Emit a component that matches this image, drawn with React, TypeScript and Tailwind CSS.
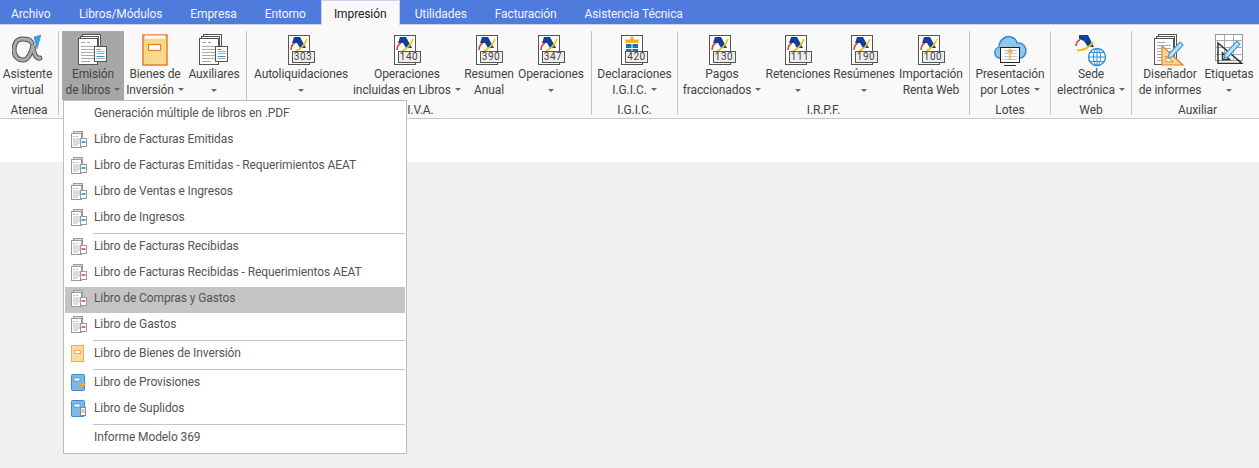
import type { ReactNode } from "react";

const FONT = "font-['Roboto','Noto_Sans',sans-serif]";

const tabs = ["Libros/Módulos", "Empresa", "Entorno"];
const tabsRight = ["Utilidades", "Facturación", "Asistencia Técnica"];

function Caret() {
  return <span className="inline-block w-0 h-0 border-x-[3px] border-x-transparent border-t-[3px] border-t-[#666] align-middle" />;
}

function DocsIcon() {
  return (
    <svg width="30" height="32" viewBox="0 0 30 32" fill="none">
      <rect x="4.5" y="0.5" width="18" height="24" fill="#fff" stroke="#555" />
      <rect x="2.5" y="2.5" width="18" height="24" fill="#fff" stroke="#555" />
      <rect x="0.5" y="4.5" width="19" height="26" fill="#fff" stroke="#555" />
      <path d="M3 8.5h4M9 8.5h3M3 12.5h14M3 15.5h14M3 18.5h14M3 21.5h14M3 24.5h14M3 27.5h9" stroke="#aaa" />
      <rect x="16.5" y="12.5" width="12" height="15" fill="#fff" stroke="#555" />
      <path d="M18.5 15.5h4M18.5 22.5h8" stroke="#1e9ad6" />
      <path d="M18.5 17.5h8M18.5 19.5h8M18.5 24.5h8" stroke="#aaa" />
    </svg>
  );
}

function BookIcon() {
  return (
    <svg width="26" height="32" viewBox="0 0 26 32">
      <rect x="1" y="1" width="24" height="30" fill="#f7d98c" stroke="#ec7a2c" strokeWidth="1.5" />
      <rect x="3" y="1.5" width="20" height="3" fill="#fff" />
      <rect x="6.5" y="10.5" width="12" height="6" fill="#fff" stroke="#ec7a2c" strokeWidth="1.2" />
    </svg>
  );
}

function AlphaIcon() {
  const d = "M20 6 C18 2 14 2 10 2 C4 2 2 8 2 13 C2 19 6 23 11 23 C16 23 19 17 21 8 C21 16 24 22 28 21";
  return (
    <svg width="32" height="30" viewBox="0 0 32 30">
      <path d="M22 3 L29 1 L25 15 Z" fill="#3a9ee0" stroke="#2a7fc0" strokeWidth="0.5" />
      <g transform="translate(0 3)" fill="none" strokeLinecap="round">
        <path d={d} stroke="#555" strokeWidth="5" />
        <path d={d} stroke="#aaa" strokeWidth="3" />
      </g>
    </svg>
  );
}

function AeatMark() {
  return (
    <svg width="20" height="16" viewBox="0 0 20 16" className="block">
      <path d="M2 14 C2 11 4 8 6 7" fill="none" stroke="#e8402a" strokeWidth="1.6" />
      <path d="M5 1 H11 L17 12 H11 L8 7 H3 Z" fill="#123f9c" />
      <path d="M7 15 C12 13 16 8 18 3" fill="none" stroke="#f4c20d" strokeWidth="1.8" />
    </svg>
  );
}

function CoatMark() {
  return (
    <svg width="20" height="18" viewBox="0 0 20 18" className="block">
      <path d="M4 7 L3 3 L7 4 L10 0 L13 4 L17 3 L16 7 Z" fill="#f2b218" />
      <rect x="4" y="8" width="12" height="10" fill="#1b6fb5" />
      <path d="M4 12.5H16M10 8V18" stroke="#fff" />
    </svg>
  );
}

function FormIcon({ code, coat }: { code: string; coat?: boolean }) {
  return (
    <div className="relative w-[27px] h-[30px] mt-[1px]">
      <div className="absolute left-0 top-0 w-[22px] h-[30px] bg-white border border-[#555]">
        {coat ? <CoatMark /> : <AeatMark />}
      </div>
      <div className="absolute left-[4px] bottom-[2px] w-[23px] h-[12px] bg-[#eee] border border-[#555] flex items-center justify-center text-[10px] leading-[10px] text-[#444] tracking-[0.5px]">
        {code}
      </div>
    </div>
  );
}

function CloudIcon() {
  return (
    <svg width="34" height="33" viewBox="0 0 34 33">
      <path d="M6 24 C1 23 0 15 6 13 C6 6 13 1 18 3 C22 4 24 7 24 9 C30 8 33 13 33 17 C33 21 30 24 27 24 Z" fill="#8ec8f0" stroke="#2d86c8" strokeWidth="1.3" />
      <rect x="7.5" y="13.5" width="19" height="15" fill="#fff" stroke="#222" />
      <path d="M11 16.5h13M11 19.5h13M11 22.5h13M11 25.5h13" stroke="#c8c8c8" />
      <path d="M9 16.5v.5M9 19.5v.5M9 22.5v.5M9 25.5v.5" stroke="#e9a030" />
      <path d="M17 26V16M14.5 18.5 17 15.5l2.5 3" fill="none" stroke="#f0a020" strokeWidth="1.2" />
      <path d="M11 31.5h12" stroke="#333" />
    </svg>
  );
}

function SedeIcon() {
  return (
    <svg width="32" height="33" viewBox="0 0 32 33">
      <path d="M1 12 C1 9 3 6 5 6" fill="none" stroke="#e8402a" strokeWidth="1.6" />
      <path d="M4 1 H13 L19 13 H13 L9 7 L4 5 Z" fill="#123f9c" />
      <path d="M2 16 C9 17 15 13 18 8" fill="none" stroke="#f4c20d" strokeWidth="2" />
      <circle cx="22" cy="23" r="8.5" fill="#fff" stroke="#2d8fd0" strokeWidth="1.4" />
      <ellipse cx="22" cy="23" rx="3.5" ry="8.5" fill="none" stroke="#2d8fd0" />
      <path d="M13.5 23H30.5M15 18.5H29M15 27.5H29M22 14.5V31.5" stroke="#2d8fd0" />
    </svg>
  );
}

function DesignIcon() {
  return (
    <svg width="32" height="32" viewBox="0 0 32 32">
      <rect x="4.5" y="0.5" width="18" height="24" fill="#fff" stroke="#555" />
      <rect x="2.5" y="2.5" width="18" height="24" fill="#fff" stroke="#555" />
      <rect x="0.5" y="4.5" width="19" height="26" fill="#fff" stroke="#555" />
      <path d="M3 8.5h8M3 11.5h14M3 14.5h14M3 17.5h14M3 20.5h8M3 23.5h8M3 26.5h8" stroke="#aaa" />
      <path d="M8 12 L29 31 H8 Z" fill="#f7d98c" stroke="#ec7a2c" strokeWidth="1.2" />
      <path d="M12 22 L19 28 H12 Z" fill="#fff" stroke="#ec7a2c" />
      <path d="M15 20 L26 8 L29 11 L18 23 L14 24 Z" fill="#bfe0f7" stroke="#3a9ee0" strokeWidth="1.2" />
    </svg>
  );
}

function LabelIcon() {
  return (
    <svg width="28" height="30" viewBox="0 0 28 30">
      <rect x="0.5" y="0.5" width="27" height="26" fill="#fff" stroke="#999" />
      <path d="M0.5 6.5H27.5M0.5 13.5H27.5M0.5 20.5H27.5M9.5 0.5V27M18.5 0.5V27" stroke="#aaa" />
      <path d="M3 9 L27 29.5 H3 Z M7.5 19 V25.5 H14.5 Z" fill="none" stroke="#333" strokeWidth="1.5" />
      <path d="M10 20 L22 7 L25 10 L13 23 L9 24 Z" fill="#bfe0f7" stroke="#3a9ee0" strokeWidth="1.2" />
    </svg>
  );
}

function RibbonButton({ className, icon, lines, caret, caretLine, active }: {
  className: string;
  icon: ReactNode;
  lines: string[];
  caret?: boolean;
  caretLine?: boolean;
  active?: boolean;
}) {
  return (
    <div className={`${className} h-[69px] flex flex-col items-center shrink-0 ${active ? "bg-[#a6a6a6]" : ""}`}>
      <div className="h-[35px] flex items-start justify-center pt-[3px]">{icon}</div>
      <div className="text-[12px] leading-[16px] tracking-[-0.1px] text-[#444] text-center whitespace-nowrap">
        {lines.map((l, i) => (
          <div key={l}>
            {l}
            {caret && i === lines.length - 1 && <span className="ml-[4px] relative top-[-1px]"><Caret /></span>}
          </div>
        ))}
        {caretLine && <div className="h-[16px] flex items-center justify-center"><Caret /></div>}
      </div>
    </div>
  );
}

function Group({ className, label, children }: { className: string; label: string; children: ReactNode }) {
  return (
    <div className={`${className} h-[84px] shrink-0 flex flex-col border-r border-[#c6c6c6]`}>
      <div className="flex h-[69px]">{children}</div>
      <div className="h-[15px] mt-[3px] text-[12px] leading-[15px] tracking-[-0.1px] text-[#444] text-center">{label}</div>
    </div>
  );
}

function MenuDocIcon({ mark }: { mark: string }) {
  return (
    <svg width="16" height="17" viewBox="0 0 16 17">
      <rect x="2.5" y="0.5" width="9" height="13" fill="#ddd" stroke="#999" />
      <rect x="0.5" y="2.5" width="10" height="14" fill="#fff" stroke="#999" />
      <path d="M2 5.5h2M5 5.5h2M2 8h7M2 10h7M2 12h7M2 14h5" stroke="#bbb" />
      <rect x="9.5" y="7.5" width="6" height="8" fill="#fff" stroke="#999" />
      <path d="M10.5 11h4" stroke={mark} strokeWidth="2" />
    </svg>
  );
}

function MenuBookIcon() {
  return (
    <svg width="14" height="17" viewBox="0 0 14 17">
      <rect x="0.5" y="0.5" width="12" height="16" fill="#fbdc9f" stroke="#f2a968" />
      <rect x="3.5" y="5.5" width="6" height="3" fill="#fff" stroke="#f2a968" />
    </svg>
  );
}

function MenuBlueIcon({ kind }: { kind: "orange" | "doc" }) {
  return (
    <svg width="16" height="17" viewBox="0 0 16 17">
      <rect x="0.5" y="0.5" width="13" height="16" rx="1" fill="#7db8ea" stroke="#3f88c8" />
      <rect x="3" y="4" width="6" height="3" fill="#fff" stroke="#3f88c8" strokeWidth="0.7" />
      {kind === "orange" ? (
        <path d="M7 12 L10 9 H15 L13 12 L9 14 Z" fill="#f0a33c" />
      ) : (
        <g>
          <rect x="9.5" y="7.5" width="5" height="8" fill="#fff" stroke="#888" />
          <path d="M10.5 10h3M10.5 12h3" stroke="#6ab04c" />
        </g>
      )}
    </svg>
  );
}

function MenuItem({ icon, children, active }: { icon?: ReactNode; children: ReactNode; active?: boolean }) {
  return (
    <div className={`h-[26px] flex items-center ${active ? "bg-[#c4c4c4]" : ""}`}>
      <div className="w-[29px] pl-[6px] pb-[3px] flex items-center shrink-0">{icon}</div>
      <span className="text-[12px] leading-[16px] tracking-[-0.1px] text-[#555] relative top-[-2px] whitespace-nowrap">{children}</span>
    </div>
  );
}

function MenuSep() {
  return <div className="my-[1px] ml-[28px] h-[1px] bg-[#c6c6c6]" />;
}

export default function App() {
  return (
    <div className={`${FONT} relative w-[1259px] h-[468px] overflow-hidden bg-[#f0f0f0]`}>
      {/* pestañas */}
      <div className="h-[25px] bg-[#4e7bdc] flex text-[12px] tracking-[-0.1px] text-[#f2f5fc] border-b border-[#c9d5f0]">
        <div className="w-[65px] h-[25px] pl-[11px] pt-[2px] flex items-center">Archivo</div>
        {tabs.map((t) => (
          <div key={t} className="h-[25px] px-[14px] pt-[2px] flex items-center whitespace-nowrap">{t}</div>
        ))}
        <div className="h-[25px] w-[79px] ml-[1px] pt-[2px] bg-[#f9f9f9] border border-b-0 border-[#c9d5f0] text-[#222] flex items-center justify-center">Impresión</div>
        <div className="w-[1px]" />
        {tabsRight.map((t) => (
          <div key={t} className="h-[25px] px-[14px] pt-[2px] flex items-center whitespace-nowrap">{t}</div>
        ))}
      </div>

      {/* cinta */}
      <div className="h-[94px] bg-[#f9f9f9] border-b border-[#c6c6c6] flex pt-[6px]">
        <Group className="w-[59px]" label="Atenea">
          <RibbonButton className="w-[55px]" icon={<AlphaIcon />} lines={["Asistente", "virtual"]} />
        </Group>
        <Group className="w-[188px] pl-[3px]" label="">
          <RibbonButton className="w-[62px]" active icon={<DocsIcon />} lines={["Emisión", "de libros"]} caret />
          <RibbonButton className="w-[62px]" icon={<BookIcon />} lines={["Bienes de", "Inversión"]} caret />
          <RibbonButton className="w-[56px]" icon={<DocsIcon />} lines={["Auxiliares"]} caretLine />
        </Group>
        <Group className="w-[345px] pl-[3px]" label="I.V.A.">
          <RibbonButton className="w-[102px]" icon={<FormIcon code="303" />} lines={["Autoliquidaciones"]} caretLine />
          <RibbonButton className="w-[110px]" icon={<FormIcon code="140" />} lines={["Operaciones", "incluidas en Libros"]} caret />
          <RibbonButton className="w-[54px]" icon={<FormIcon code="390" />} lines={["Resumen", "Anual"]} />
          <RibbonButton className="w-[70px]" icon={<FormIcon code="347" />} lines={["Operaciones"]} caretLine />
        </Group>
        <Group className="w-[86px]" label="I.G.I.C.">
          <RibbonButton className="w-[85px]" icon={<FormIcon code="420" coat />} lines={["Declaraciones", "I.G.I.C."]} caret />
        </Group>
        <Group className="w-[292px]" label="I.R.P.F.">
          <RibbonButton className="w-[88px]" icon={<FormIcon code="130" />} lines={["Pagos", "fraccionados"]} caret />
          <RibbonButton className="w-[64px]" icon={<FormIcon code="111" />} lines={["Retenciones"]} caretLine />
          <RibbonButton className="w-[68px]" icon={<FormIcon code="190" />} lines={["Resúmenes"]} caretLine />
          <RibbonButton className="w-[66px]" icon={<FormIcon code="100" />} lines={["Importación", "Renta Web"]} />
        </Group>
        <Group className="w-[81px]" label="Lotes">
          <RibbonButton className="w-[80px]" icon={<CloudIcon />} lines={["Presentación", "por Lotes"]} caret />
        </Group>
        <Group className="w-[81px]" label="Web">
          <RibbonButton className="w-[80px]" icon={<SedeIcon />} lines={["Sede", "electrónica"]} caret />
        </Group>
        <div className="w-[127px] h-[84px] shrink-0 flex flex-col">
          <div className="flex h-[69px]">
            <RibbonButton className="w-[76px]" icon={<DesignIcon />} lines={["Diseñador", "de informes"]} />
            <RibbonButton className="w-[42px]" icon={<LabelIcon />} lines={["Etiquetas"]} caretLine />
          </div>
          <div className="h-[15px] mt-[3px] text-[12px] leading-[15px] tracking-[-0.1px] text-[#444] text-center pl-[4px]">Auxiliar</div>
        </div>
      </div>

      <div className="h-[43px] bg-white" />

      {/* menú desplegable */}
      <div className="absolute left-[63px] top-[100px] w-[344px] h-[354px] bg-white border border-[#bdbdbd] p-[1px]">
        <MenuItem>Generación múltiple de libros en .PDF</MenuItem>
        <MenuItem icon={<MenuDocIcon mark="#42a5e0" />}>Libro de Facturas Emitidas</MenuItem>
        <MenuItem icon={<MenuDocIcon mark="#42a5e0" />}>Libro de Facturas Emitidas - Requerimientos AEAT</MenuItem>
        <MenuItem icon={<MenuDocIcon mark="#42a5e0" />}>Libro de Ventas e Ingresos</MenuItem>
        <MenuItem icon={<MenuDocIcon mark="#42a5e0" />}>Libro de Ingresos</MenuItem>
        <MenuSep />
        <MenuItem icon={<MenuDocIcon mark="#e86a7a" />}>Libro de Facturas Recibidas</MenuItem>
        <MenuItem icon={<MenuDocIcon mark="#e86a7a" />}>Libro de Facturas Recibidas - Requerimientos AEAT</MenuItem>
        <MenuItem active icon={<MenuDocIcon mark="#e86a7a" />}>Libro de Compras y Gastos</MenuItem>
        <MenuItem icon={<MenuDocIcon mark="#e86a7a" />}>Libro de Gastos</MenuItem>
        <MenuSep />
        <MenuItem icon={<MenuBookIcon />}>Libro de Bienes de Inversión</MenuItem>
        <MenuSep />
        <MenuItem icon={<MenuBlueIcon kind="orange" />}>Libro de Provisiones</MenuItem>
        <MenuItem icon={<MenuBlueIcon kind="doc" />}>Libro de Suplidos</MenuItem>
        <MenuSep />
        <MenuItem>Informe Modelo 369</MenuItem>
      </div>
    </div>
  );
}
